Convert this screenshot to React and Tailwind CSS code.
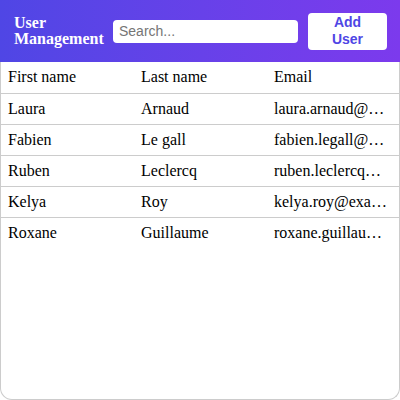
import React from 'react'

const users = [
    { first: 'Laura', last: 'Arnaud', email: 'laura.arnaud@example.com' },
    { first: 'Fabien', last: 'Le gall', email: 'fabien.legall@example.com' },
    { first: 'Ruben', last: 'Leclercq', email: 'ruben.leclercq@example.com' },
    { first: 'Kelya', last: 'Roy', email: 'kelya.roy@example.com' },
    { first: 'Roxane', last: 'Guillaume', email: 'roxane.guillaume@example.com' },
]

const App = () => {
    return (
        <div className="w-[400px] h-[400px] flex flex-col bg-white" style={{ fontFamily: '"Liberation Serif", serif' }}>
            <div className="h-[62px] flex items-center pl-[14px] pr-[13px] bg-gradient-to-r from-[#4f46e5] to-[#7c3aed]">
                <div className="text-white font-bold text-[16px] leading-[16px] w-[89px]">User Management</div>
                <input
                    type="text"
                    placeholder="Search..."
                    className="ml-[10px] w-[185px] h-[23px] rounded-[4px] bg-white px-[6px] text-[14px] text-gray-800 placeholder:text-[#757575] outline-none"
                    style={{ fontFamily: '"Liberation Sans", Arial, sans-serif' }}
                />
                <button
                    type="button"
                    className="ml-[10px] w-[79px] h-[37px] rounded-[4px] bg-white text-[#4f46e5] font-bold text-[14px] leading-[17px]"
                    style={{ fontFamily: '"Liberation Sans", Arial, sans-serif' }}
                >
                    Add<br />User
                </button>
            </div>
            <div className="flex-1 border-x border-b border-[#ccc] rounded-b-[12px]">
                <table className="w-full table-fixed border-collapse text-[16px] text-black">
                    <thead>
                        <tr className="border-b border-[#ccc] h-[31px]">
                            <th className="font-normal text-left px-[7px] w-[133px]">First name</th>
                            <th className="font-normal text-left px-[7px] w-[133px]">Last name</th>
                            <th className="font-normal text-left px-[7px]">Email</th>
                        </tr>
                    </thead>
                    <tbody>
                        {users.map((u, i) => (
                            <tr key={u.first} className={(i < users.length - 1 ? 'border-b border-[#ccc] ' : '') + 'h-[31px]'}>
                                <td className="px-[7px]">{u.first}</td>
                                <td className="px-[7px]">{u.last}</td>
                                <td className="pl-[7px] pr-[11px] overflow-hidden text-ellipsis whitespace-nowrap">{u.email}</td>
                            </tr>
                        ))}
                    </tbody>
                </table>
            </div>
        </div>
    )
}

export default App
